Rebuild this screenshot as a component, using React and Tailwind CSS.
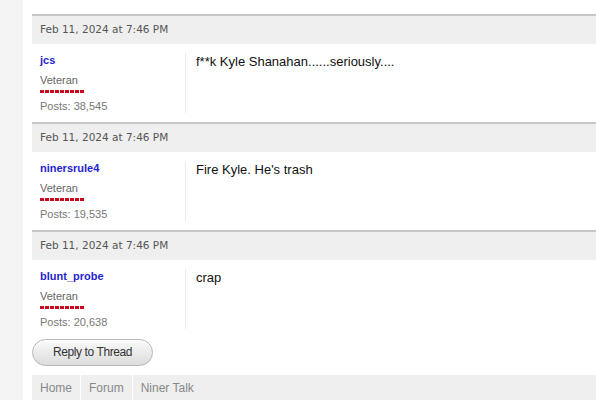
import React from 'react';

const posts = [
  { user: 'jcs', posts: '38,545', text: 'f**k Kyle Shanahan......seriously....' },
  { user: 'ninersrule4', posts: '19,535', text: "Fire Kyle. He's trash" },
  { user: 'blunt_probe', posts: '20,638', text: 'crap' },
];

const arial = { fontFamily: '"Liberation Sans", Arial, sans-serif' };

const RankBar = () => (
  <div className="flex gap-[1px] mt-[4px]">
    {Array.from({ length: 9 }).map((_, i) => (
      <span key={i} className="block w-[4px] h-[3px] bg-[#c8081c]" />
    ))}
  </div>
);

const Post = ({ post }) => (
  <div>
    <div className="border-t-2 border-[#c8c8c8] bg-[#efefef] h-[30px] pl-2 flex items-center">
      <span
        className="text-[10.5px] text-[#555]"
        style={{ fontFamily: '"DejaVu Sans", Verdana, sans-serif' }}
      >
        Feb 11, 2024 at 7:46 PM
      </span>
    </div>
    <div className="flex py-[9px]" style={arial}>
      <div className="w-[154px] h-[60px] pl-2 border-r border-[#ebebeb]">
        <div className="text-[11px] leading-[14px] font-bold text-[#1f1fcf]">{post.user}</div>
        <div className="text-[11px] leading-[12px] text-[#666] mt-[7px]">Veteran</div>
        <RankBar />
        <div className="text-[11px] leading-[12px] text-[#777] mt-[7px]">Posts: {post.posts}</div>
      </div>
      <div className="pl-[10px] pt-[1px] text-[13px] leading-[16px] text-[#111]">{post.text}</div>
    </div>
  </div>
);

export default function App() {
  return (
    <div className="flex w-[596px] h-[400px] overflow-hidden bg-white">
      <div className="w-[23px] shrink-0 bg-[#f4f4f4]" />
      <div className="flex-1 pl-[9px] pt-[14px]">
        {posts.map((p) => (
          <Post key={p.user} post={p} />
        ))}
        <div>
          <button
            className="w-[121px] h-[27px] rounded-full border border-[#b5b5b5] bg-gradient-to-b from-[#fafafa] to-[#dcdcdc] text-[12px] tracking-[-0.4px] text-[#333] shadow-[inset_0_1px_0_#fff]"
            style={arial}
          >
            Reply to Thread
          </button>
        </div>
        <div className="mt-[9px] bg-[#efefef] h-[26px] flex text-[12px] text-[#888]" style={arial}>
          <div className="px-2 flex items-center border-r border-white">Home</div>
          <div className="px-2 flex items-center border-r border-white">Forum</div>
          <div className="px-2 flex items-center">Niner Talk</div>
        </div>
      </div>
    </div>
  );
}
